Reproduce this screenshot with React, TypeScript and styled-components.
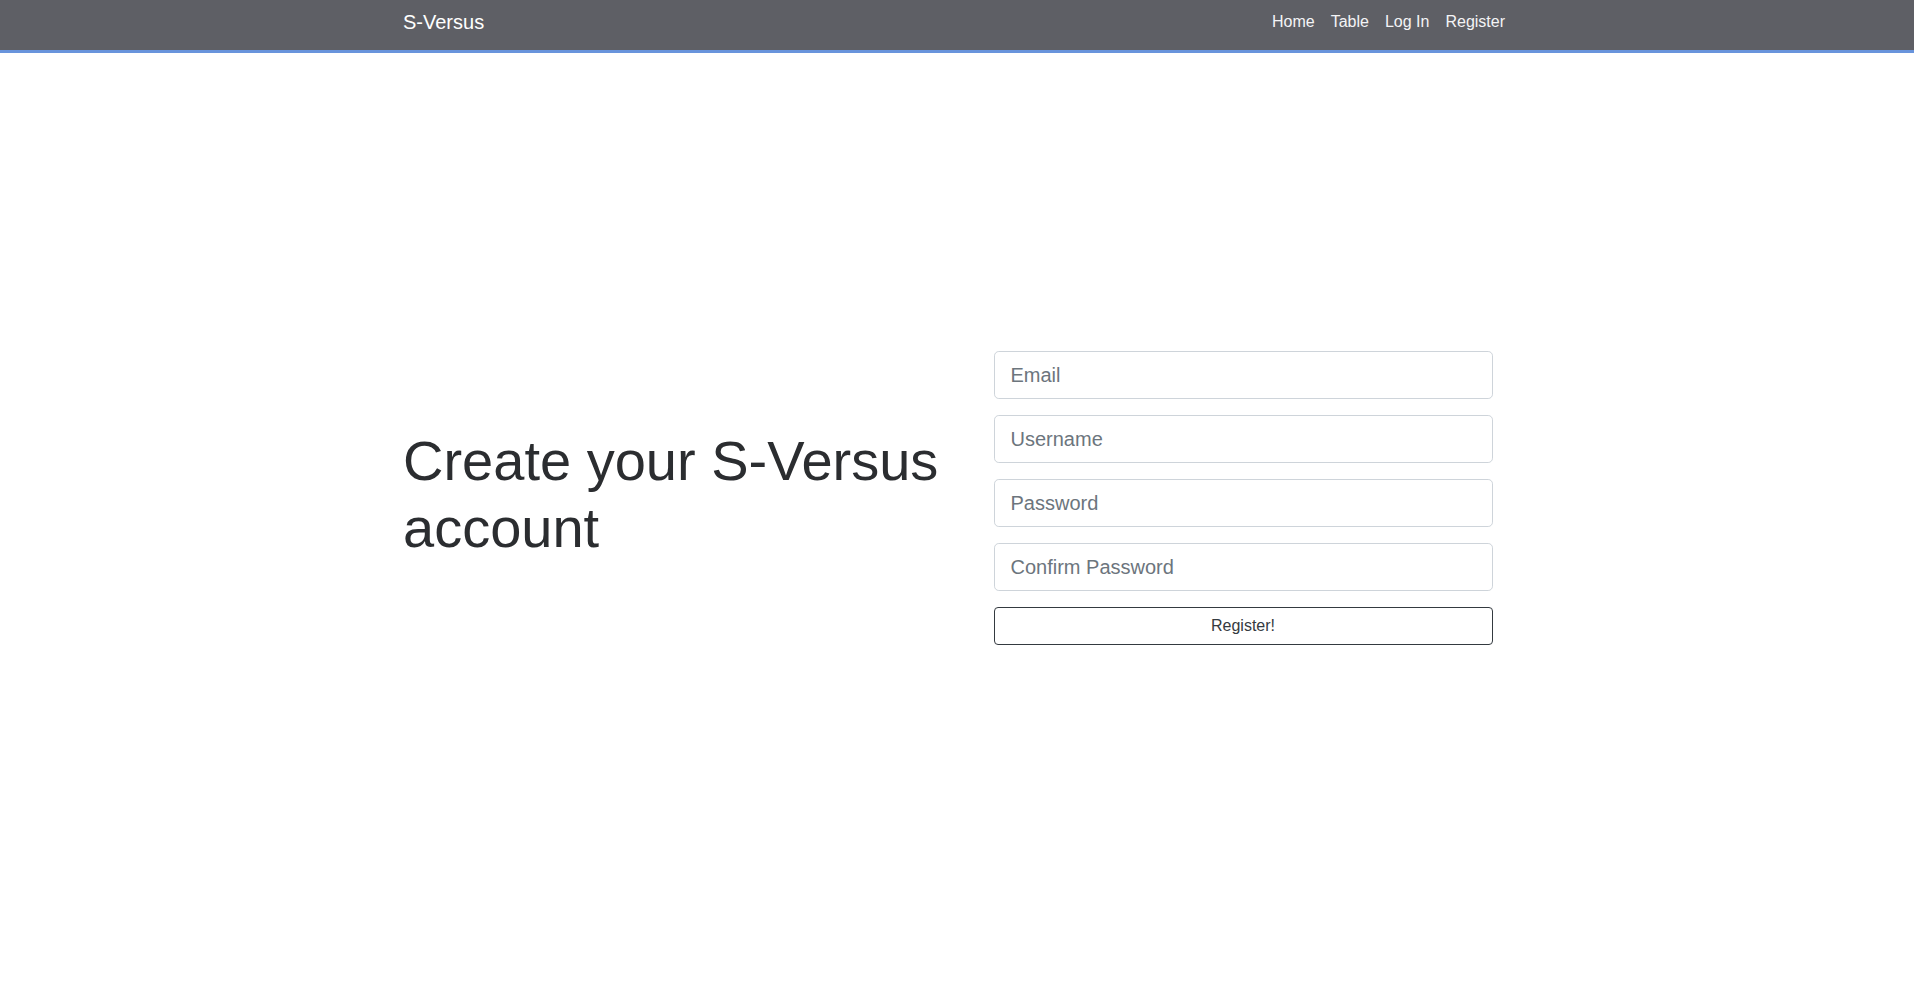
import React from "react";
import styled, { createGlobalStyle } from "styled-components";

const GlobalStyle = createGlobalStyle`
  *, *::before, *::after { box-sizing: border-box; }
  html, body { margin: 0; padding: 0; background: #fff; }
  body {
    font-family: "Liberation Sans", Arial, sans-serif;
    font-size: 16px;
    line-height: 1.5;
    color: #212529;
  }
`;

const NavBar = styled.nav`
  background: #5e5f65;
  border-bottom: 3px solid #6894dc;
  height: 53px;
  padding-bottom: 6px;
`;

const Container = styled.div`
  width: 1110px;
  margin-left: calc(50% - 554px);
`;

const NavInner = styled(Container)`
  height: 100%;
  display: flex;
  align-items: center;
  justify-content: space-between;
`;

const Brand = styled.a`
  font-size: 20px;
  line-height: 30px;
  color: #ffffff;
  text-decoration: none;
`;

const NavLinks = styled.ul`
  display: flex;
  list-style: none;
  margin: 0;
  padding: 0;
`;

const NavLink = styled.a`
  display: block;
  padding: 0 8px;
  font-size: 16px;
  line-height: 24px;
  color: #f4f4f6;
  text-decoration: none;
`;

const Main = styled(Container)`
  padding-top: 298px;
`;

const Row = styled.div`
  display: grid;
  grid-template-columns: 1fr 1fr;
  column-gap: 30px;
  align-items: center;
`;

const Heading = styled.h1`
  margin: 0 0 8px;
  font-size: 56px;
  font-weight: 300;
  line-height: 1.2;
  color: #2b2d30;
`;

const Form = styled.form`
  width: 499px;
  justify-self: center;
  display: flex;
  flex-direction: column;
  gap: 16px;
`;

const Input = styled.input`
  display: block;
  width: 100%;
  height: 48px;
  padding: 8px 16px;
  font-family: "Liberation Sans", Arial, sans-serif;
  font-size: 20px;
  line-height: 1.5;
  color: #495057;
  background: #fff;
  border: 1px solid #ced4da;
  border-radius: 4.8px;
  outline: none;
  &::placeholder { color: #6c757d; opacity: 1; }
`;

const Button = styled.button`
  display: block;
  width: 100%;
  height: 38px;
  padding: 6px 12px;
  font-family: "Liberation Sans", Arial, sans-serif;
  font-size: 16px;
  line-height: 1.5;
  color: #343a40;
  background: transparent;
  border: 1px solid #343a40;
  border-radius: 4px;
  cursor: pointer;
`;

const links = ["Home", "Table", "Log In", "Register"];
const fields = [
  { type: "email", placeholder: "Email" },
  { type: "text", placeholder: "Username" },
  { type: "password", placeholder: "Password" },
  { type: "password", placeholder: "Confirm Password" },
];

export default function App() {
  return (
    <>
      <GlobalStyle />
      <NavBar>
        <NavInner>
          <Brand href="#">S-Versus</Brand>
          <NavLinks>
            {links.map((l) => (
              <li key={l}>
                <NavLink href="#">{l}</NavLink>
              </li>
            ))}
          </NavLinks>
        </NavInner>
      </NavBar>
      <Main>
        <Row>
          <div>
            <Heading>Create your S-Versus account</Heading>
          </div>
          <Form onSubmit={(e) => e.preventDefault()}>
            {fields.map((f) => (
              <Input key={f.placeholder} type={f.type} placeholder={f.placeholder} />
            ))}
            <Button type="submit">Register!</Button>
          </Form>
        </Row>
      </Main>
    </>
  );
}
